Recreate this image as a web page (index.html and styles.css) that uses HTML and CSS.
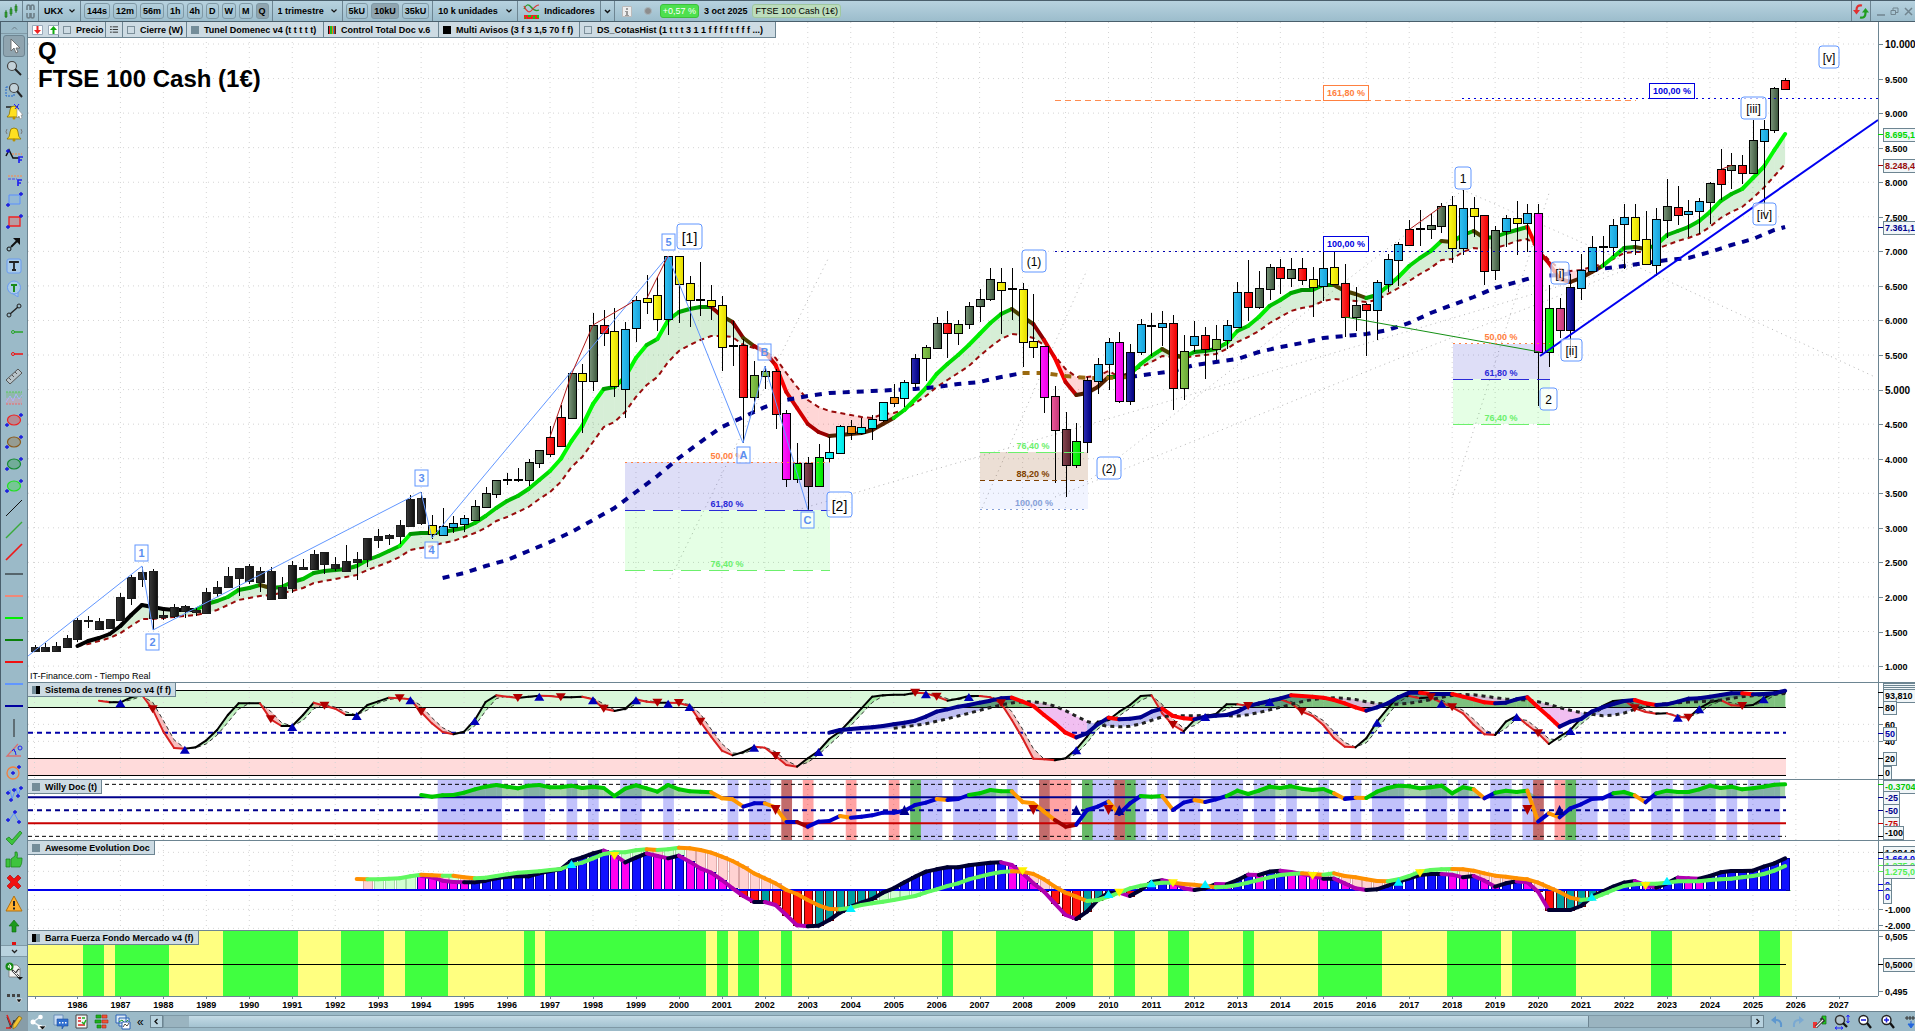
FILE: index.html
```html
<!DOCTYPE html>
<html lang="es">
<head>
  <meta charset="UTF-8">
  <title>FTSE 100 Cash (1€)</title>
  <link rel="stylesheet" href="styles.css">
</head>
<body>
  <header class="topbar">
    <button class="cell icon-cell" aria-label="Tipo de gráfico">
      <svg width="14" height="16" viewBox="0 0 14 16"><path d="M2 7v8M7 4v9M12 1v9" stroke="#2c8a2c"/><path d="M1 9h2v5H1zM6 6h2v5H6zM11 3h2v5h-2z" fill="#35a535" stroke="#1c6d1c" stroke-width=".6"/></svg>
    </button>
    <button class="cell link-cell" aria-label="Vincular">
      <svg width="9" height="15" viewBox="0 0 9 15" fill="none" stroke="#6d7f88" stroke-width="1.6"><path d="M1 6V2.500q0-1.500 1.500-1.500T4 2.500V6M5 6V2.500Q5 1 6.500 1T8 2.500V6M1 9v3.500Q1 14 2.500 14T4 12.500V9M5 9v3.500Q5 14 6.500 14T8 12.500V9"/></svg>
    </button>
    <div class="cell"><select class="pick pick-symbol" aria-label="Valor"><option>UKX</option></select></div>
    <div class="cell group">
      <button class="tf">144s</button><button class="tf">12m</button><button class="tf">56m</button><button class="tf">1h</button><button class="tf">4h</button><button class="tf">D</button><button class="tf">W</button><button class="tf">M</button><button class="tf on">Q</button>
    </div>
    <div class="cell"><select class="pick pick-period" aria-label="Periodo"><option>1 trimestre</option></select></div>
    <div class="cell group">
      <button class="tf">5kU</button><button class="tf on">10kU</button><button class="tf">35kU</button>
    </div>
    <div class="cell"><select class="pick pick-units" aria-label="Unidades"><option>10 k unidades</option></select></div>
    <button class="cell indic">
      <svg width="17" height="16" viewBox="0 0 17 16"><path d="M1 12h15v4H1z" fill="#e22"/><path d="M2 14h1v2H2zM5 12h3v2H5zM10 13h2v3h-2zM14 12h2v3h-2z" fill="#1c1"/><path d="M1 6Q4-1 8 4t8 3" fill="none" stroke="#2a9a2a" stroke-width="1.300"/><path d="M1 3q4 9 8 4t7-5" fill="none" stroke="#d33" stroke-width="1.200"/></svg>
      Indicadores
    </button>
    <button class="cell chev-cell" aria-label="Más indicadores"><svg width="7" height="5" viewBox="0 0 7 5"><path d="M1 1l2.500 2.500L6 1" fill="none" stroke="#111" stroke-width="1.500"/></svg></button>
    <div class="info">
      <button class="plain" aria-label="Información"><svg width="10" height="11" viewBox="0 0 10 11"><path d="M.5.5h9v10h-9z" fill="#eee" stroke="#bbb"/><path d="M4 2h2v2H4zM3 5h3v4h1v1H3V9h1V6H3z" fill="#999"/></svg></button>
      <span class="dot"></span>
      <span class="chg">+0,57 %</span>
      <b>3 oct 2025</b>
      <span class="name">FTSE 100 Cash (1€)</span>
    </div>
    <button class="cell sync" aria-label="Sincronizar">
      <svg width="16" height="15" viewBox="0 0 16 15" fill="none" stroke-width="2.200"><path d="M9 1.500Q3.500.5 3.500 6v1" stroke="#e03030"/><path d="M0 6h7L3.500 10.500z" fill="#e03030"/><path d="M7 13.500q5.500 1 5.500-4.500V7" stroke="#1f9e1f"/><path d="M9 8.500h7L12.500 4z" fill="#1f9e1f"/></svg>
    </button>
    <div class="win">
      <button class="plain" aria-label="Minimizar"><svg width="9" height="9" viewBox="0 0 9 9"><path d="M1 8h8" stroke="#71858f" stroke-width="1.500"/></svg></button>
      <button class="plain" aria-label="Restaurar"><svg width="9" height="9" viewBox="0 0 9 9" fill="none" stroke="#71858f"><path d="M1 3.500h4.500v4H1zM3 3V1h5v4.500H6"/></svg></button>
      <button class="plain" aria-label="Cerrar"><svg width="9" height="9" viewBox="0 0 9 9"><path d="M1 1l7 7M8 1L1 8" stroke="#71858f" stroke-width="1.500"/></svg></button>
    </div>
  </header>

  <main class="work">
    <nav class="rail" aria-label="Herramientas de dibujo">
      <button class="rail-scroll" aria-label="Subir"><svg width="7" height="4" viewBox="0 0 7 4"><path d="M1 3.500L3.500 1 6 3.500" fill="none" stroke="#6d7f88"/></svg></button>
      <div class="tools" id="tools"></div>
      <button class="rail-scroll down" aria-label="Bajar"><svg width="7" height="5" viewBox="0 0 7 5"><path d="M1 1l2.500 2.500L6 1" fill="none" stroke="#222" stroke-width="1.300"/></svg></button>
      <button class="tool tool-cfg" aria-label="Dibujos guardados">
        <svg width="18" height="18" viewBox="0 0 18 18"><path d="M4 3h8l3 3v9H4z" fill="#f4f4f4" stroke="#777" stroke-width=".8"/><circle cx="4.500" cy="4.500" r="4" fill="#178a17"/><path d="M5 2L3 5h4M5.500 3v4" stroke="#fff" fill="none"/><path d="M7 8l7 7M14 7l-4 5" stroke="#333" stroke-width="2"/><path d="M8 9l6 6M14 8l-3 4" stroke="#eee"/><path d="M12 15h6l-3 3z" fill="#111"/></svg>
      </button>
      <button class="tool tool-more" aria-label="Más herramientas">
        <svg width="18" height="12" viewBox="0 0 18 12"><path d="M2 2h3v3H2zM7 2h3v3H7zM12 2h3v3h-3z" fill="#444"/><path d="M11 7h6l-3 4z" fill="#111" stroke="#fff" stroke-width=".6"/></svg>
      </button>
    </nav>

    <section class="charts">
      <div class="panel price">
        <svg id="price" class="plot" viewBox="28 22 1887 660" preserveAspectRatio="none"></svg>
        <div class="tabs">
          <span class="tab">
            <button class="plain" aria-label="Vender"><svg width="11" height="10" viewBox="0 0 11 10"><path d="M.5.5h10v9H.5z" fill="#fff" stroke="#9ab"/><path d="M4.500 1h2v4H9L5.500 9 2 5h2.500z" fill="#e22"/></svg></button>
            <button class="plain" aria-label="Comprar"><svg width="11" height="10" viewBox="0 0 11 10"><path d="M.5.5h10v9H.5z" fill="#fff" stroke="#9ab"/><path d="M4.500 9h2V5H9L5.500 1 2 5h2.500z" fill="#1a1"/></svg></button>
          </span>
          <button class="tab"><i class="sq"></i>Precio</button>
          <button class="tab" aria-label="Lista"><svg width="9" height="9" viewBox="0 0 9 9"><path d="M0 1.500h2M0 4.500h2M0 7.500h2M3 1.500h6M3 4.500h6M3 7.500h6" stroke="#222"/></svg></button>
          <button class="tab"><i class="sq"></i>Cierre (W)</button>
          <button class="tab"><i class="sq grey"></i>Tunel Domenec v4 (t t t t t)</button>
          <button class="tab"><i class="sq multi"></i>Control Total Doc v.6</button>
          <button class="tab"><i class="sq black"></i>Multi Avisos (3 f 3 1,5 70 f f)</button>
          <button class="tab"><i class="sq"></i>DS_CotasHist (1 t t t 3 1 1 f f f f t f f f ...)</button>
        </div>
        <h1 class="title">Q<br>FTSE 100 Cash (1€)</h1>
        <p class="credit">IT-Finance.com - Tiempo Real</p>
      </div>
      <div class="panel trains">
        <svg id="trains" class="plot" viewBox="28 682 1887 97" preserveAspectRatio="none"></svg>
        <button class="tab legend"><i class="sq half"></i>Sistema de trenes Doc v4 (f f)</button>
      </div>
      <div class="panel willy">
        <svg id="willy" class="plot" viewBox="28 779 1887 61" preserveAspectRatio="none"></svg>
        <button class="tab legend"><i class="sq grey"></i>Willy Doc (t)</button>
      </div>
      <div class="panel awesome">
        <svg id="awesome" class="plot" viewBox="28 840 1887 90" preserveAspectRatio="none"></svg>
        <button class="tab legend"><i class="sq grey"></i>Awesome Evolution Doc</button>
      </div>
      <div class="panel force">
        <svg id="force" class="plot" viewBox="28 930 1887 66" preserveAspectRatio="none"></svg>
        <button class="tab legend"><i class="sq half2"></i>Barra Fuerza Fondo Mercado v4 (f)</button>
      </div>
      <div class="panel years">
        <svg id="years" class="plot" viewBox="28 996 1887 15" preserveAspectRatio="none"></svg>
      </div>
    </section>
  </main>

  <footer class="bottombar">
    <button class="draw" aria-label="Dibujar"><svg width="18" height="16" viewBox="0 0 18 16"><path d="M2 3l4 11 3-8 2 6M4 14L14 2" fill="none" stroke="#333"/><path d="M2 1l4 10M1 14h5" stroke="#d22" stroke-width="1.500"/><path d="M14 2l3 2-6 9-3 2 0-4z" fill="#f4c430" stroke="#8a6914" stroke-width=".7"/></svg></button>
    <button class="plain" aria-label="Compartir"><svg width="18" height="16" viewBox="0 0 18 16"><path d="M11 3L4 8l8 5" fill="none" stroke="#eef4f7" stroke-width="1.500"/><circle cx="11.500" cy="3" r="2.300" fill="#fff"/><circle cx="4" cy="8" r="2.500" fill="#fff"/><circle cx="11" cy="13" r="2.300" fill="#fff"/><path d="M10 12h7l-3.500 4z" fill="#111" stroke="#fff" stroke-width=".6"/></svg></button>
    <button class="plain" aria-label="Chat"><svg width="16" height="16" viewBox="0 0 16 16"><path d="M1 1h9v10H1z" fill="#c9dcf2" stroke="#6a8fb8"/><path d="M4 5h11v7h-4l-2 3v-3H4z" fill="#2f6fd0" stroke="#1f4fa0" stroke-width=".6"/><path d="M6 8h1.500v1.500H6zM9 8h1.500v1.500H9zM12 8h1.500v1.500H12z" fill="#fff"/></svg></button>
    <button class="plain" aria-label="Informe"><svg width="13" height="15" viewBox="0 0 13 15"><path d="M1 1h11v13H1z" fill="#f5f5f5" stroke="#444"/><path d="M3 4h3M3 7h3M3 11h7" stroke="#d22" stroke-width="1.500"/><path d="M7 4h3M7 8l2 2 2-4" stroke="#2a2" stroke-width="1.500" fill="none"/></svg></button>
    <button class="plain" aria-label="Órdenes"><svg width="15" height="15" viewBox="0 0 15 15"><path d="M2 1h5v3H2zM1 6h6v3H1zM3 11h4v3H3z" fill="#1db11d" stroke="#0b7a0b" stroke-width=".6"/><path d="M8 1h5v3H8zM8 6h6v3H8zM8 11h4v3H8z" fill="#e53" stroke="#a22" stroke-width=".6"/></svg></button>
    <button class="plain" aria-label="Ventanas"><svg width="16" height="16" viewBox="0 0 16 16"><path d="M1 1h10v8H1zM4 4h10v8H4z" fill="#dfeaf5" stroke="#2a63b8"/><path d="M4 8l3-2 3 3 3-3" fill="none" stroke="#2a2"/><path d="M7 8h8v7H7z" fill="#fff" stroke="#2a63b8"/><path d="M8 13l2-3 2 2 2-3" fill="none" stroke="#222" stroke-width=".8"/></svg></button>
    <button class="plain fold" aria-label="Plegar">«</button>
    <div class="scroller">
      <button class="sc-btn" aria-label="Anterior"><svg width="5" height="7" viewBox="0 0 5 7"><path d="M3.500 1L1 3.500 3.500 6" fill="none" stroke="#111" stroke-width="1.300"/></svg></button>
      <div class="track"><div class="thumb"></div></div>
      <button class="sc-btn" aria-label="Siguiente"><svg width="5" height="7" viewBox="0 0 5 7"><path d="M1.500 1L4 3.500 1.500 6" fill="none" stroke="#111" stroke-width="1.300"/></svg></button>
    </div>
    <div class="zooms">
      <button class="plain" aria-label="Deshacer"><svg width="14" height="14" viewBox="0 0 14 14"><path d="M4 5q8-1 7 7" fill="none" stroke="#5d97cf" stroke-width="2"/><path d="M1 5l5-4v8z" fill="#5d97cf"/></svg></button>
      <button class="plain" aria-label="Rehacer"><svg width="14" height="14" viewBox="0 0 14 14"><path d="M10 5Q2 4 3 12" fill="none" stroke="#7aa9d2" stroke-width="2"/><path d="M13 5L8 1v8z" fill="#7aa9d2"/></svg></button>
      <button class="plain" aria-label="Configurar"><svg width="15" height="16" viewBox="0 0 15 16"><path d="M1 8h4v6H1z" fill="#e33"/><path d="M10 2h4v8h-4z" fill="#2c2" stroke="#161" stroke-width=".7"/><path d="M4 13l7-7M9 4l3 4" stroke="#333" stroke-width="3"/><path d="M4 13l7-7" stroke="#eee" stroke-width="1.300"/></svg></button>
      <button class="plain" aria-label="Ajustar"><svg width="16" height="16" viewBox="0 0 16 16"><circle cx="6" cy="6" r="4.500" fill="#b4c5cd" stroke="#333" stroke-width="1.500"/><path d="M9 9l4 4" stroke="#111" stroke-width="2.300"/><path d="M14 1v8M12.500 3L14 1l1.500 2M12.500 7L14 9l1.500-2M1 14h8M3 12.500L1 14l2 1.500M7 12.500L9 14l-2 1.500" fill="none" stroke="#22f"/></svg></button>
      <button class="plain" aria-label="Alejar"><svg width="16" height="16" viewBox="0 0 16 16"><circle cx="6.500" cy="6" r="4.500" fill="#fff" stroke="#222" stroke-width="1.400"/><path d="M10 9l4 5" stroke="#111" stroke-width="2.300"/><path d="M4 6h5" stroke="#22d" stroke-width="1.600"/></svg></button>
      <button class="plain" aria-label="Acercar"><svg width="16" height="16" viewBox="0 0 16 16"><circle cx="6.500" cy="6" r="4.500" fill="#fff" stroke="#222" stroke-width="1.400"/><path d="M10 9l4 5" stroke="#111" stroke-width="2.300"/><path d="M4 6h5M6.500 3.500v5" stroke="#22d" stroke-width="1.600"/></svg></button>
      <button class="plain" aria-label="Regla"><svg width="16" height="14" viewBox="0 0 16 14"><path d="M2 3h14M4 1v4M7 1v4M10 1v4M13 1v4" stroke="#333"/><path d="M8 6v4M5 9l3 4 3-4z" fill="#26d" stroke="#26d"/></svg></button>
    </div>
  </footer>
  <script src="script.js"></script>
</body>
</html>
```

FILE: styles.css
```css
* { box-sizing: border-box; }
body {
  margin: 0;
  height: 100vh;
  display: flex;
  flex-direction: column;
  overflow: hidden;
  font: 9px "Liberation Sans", Arial, sans-serif;
  color: #000;
  background: #9bbac8;
}
button, select { font: inherit; font-weight: bold; color: inherit; background: none; border: 0; padding: 0; margin: 0; }
svg { display: block; }

/* top toolbar */
.topbar {
  flex: none;
  height: 22px;
  display: flex;
  background: linear-gradient(#b7d2df, #9cbdcc);
  border-top: 1px solid #4a5f6c;
  border-bottom: 1px solid #4a5f6c;
}
.cell { display: flex; align-items: center; justify-content: center; border-right: 1px solid #6d8592; }
.icon-cell { width: 23px; }
.link-cell { width: 16px; }
.group { gap: 3px; padding: 0 3px; }
.pick {
  appearance: none;
  height: 18px;
  padding-left: 5px;
  background: no-repeat right 5px center / 6px 4px url("data:image/svg+xml,%3Csvg xmlns='http://www.w3.org/2000/svg' viewBox='0 0 6 4'%3E%3Cpath d='M.5.5L3 3 5.500.5' fill='none' stroke='%23111' stroke-width='1.200'/%3E%3C/svg%3E");
}
.pick-symbol { width: 41px; }
.pick-period { width: 69px; }
.pick-units { width: 84px; }
.tf { height: 16px; padding: 0 2px; border: 1px solid #7f99a6; border-radius: 3px; }
.tf.on { background: #8fa4af; }
.indic { gap: 4px; padding: 0 5px; }
.chev-cell { width: 14px; }
.info { display: flex; align-items: center; gap: 5px; padding-left: 7px; }
.dot { width: 8px; height: 8px; margin: 0 3px 0 7px; border-radius: 50%; background: #8d8d8d; border: 1px solid #a9b6bc; }
.chg { padding: 1px 2px; border-radius: 3px; color: #fff; background: #4ee04e; border: 1px solid #3cc03c; }
.name { padding: 1px 2px; border-radius: 3px; background: #bcdcbc; border: 1px solid #9fc79f; }
.sync { width: 20px; margin-left: auto; border-left: 1px solid #6d8592; }
.win { display: flex; align-items: center; justify-content: space-around; width: 44px; padding-left: 3px; }
.plain { display: flex; align-items: center; justify-content: center; }

/* left rail */
.work { flex: 1; min-height: 0; display: flex; }
.rail { width: 28px; display: flex; flex-direction: column; border-left: 1px solid #4a5f6c; border-right: 1px solid #6d8592; }
.rail-scroll { flex: none; height: 12px; display: flex; align-items: center; justify-content: center; border-bottom: 1px solid #7f99a6; }
.rail-scroll.down { background: #b9d3df; border-top: 1px solid #7f99a6; }
.tools { flex: 1; min-height: 0; overflow: hidden; padding-top: 1px; }
.tool { width: 26px; height: 22px; display: flex; align-items: center; justify-content: center; }
.tool.on { width: 22px; margin: 0 2px; background: #8fa4af; border: 1px solid #6d8592; border-radius: 3px; }
.tool-cfg { height: 28px; }
.tool-more { height: 26px; }

/* stacked charts */
.charts { flex: 1; min-width: 0; display: flex; flex-direction: column; background: #fff; }
.panel { position: relative; min-height: 0; }
.price { flex: 660 1 0; }
.trains { flex: 97 1 0; }
.willy { flex: 61 1 0; }
.awesome { flex: 90 1 0; }
.force { flex: 66 1 0; }
.years { flex: 15 1 0; }
.plot { width: 100%; height: 100%; }
.tabs {
  position: absolute;
  top: 0;
  left: 0;
  display: grid;
  grid-template-columns: 31px 47px 17px 64px 137px 115px 141px 196px;
}
.tab {
  height: 16px;
  display: flex;
  align-items: center;
  gap: 5px;
  padding: 0 4px;
  white-space: nowrap;
  background: #cddbe3;
  border-right: 1px solid #6d8592;
  border-bottom: 1px solid #6d8592;
}
.legend { position: absolute; top: 0; left: 0; height: 15px; border-top: 1px solid #6d8592; }
.sq { flex: none; width: 8px; height: 8px; border: 1px solid #7d909b; }
.sq.grey { background: #748d99; border-color: #748d99; }
.sq.black { background: #000; border-color: #000; }
.sq.multi { border: 0; background: linear-gradient(90deg, #111 12%, #e22 12% 30%, #2b2 30% 50%, #e80 50% 62%, #29b 62% 75%, #c22 75% 88%, #333 88%); }
.sq.half { border: 0; background: linear-gradient(90deg, #748d99 50%, #000 50%); }
.sq.half2 { border: 0; background: linear-gradient(90deg, #000 50%, #748d99 50%); }
.title { position: absolute; top: 15px; left: 10px; margin: 0; font-size: 24px; line-height: 28px; }
.credit { position: absolute; left: 2px; bottom: 0; margin: 0; line-height: 12px; }

/* svg pieces */
.crisp { shape-rendering: crispEdges; }
.grid { stroke: #d4d4d4; stroke-dasharray: 1 4; }
.frame { stroke: #6d8592; shape-rendering: crispEdges; }
.tick { font-weight: bold; }
.big { font-size: 10px; }
.badge { fill: #f1f6f8; stroke: #6d8592; shape-rendering: crispEdges; }
.wave { fill: #fff; fill-opacity: .7; stroke: #6196ff; }
.wave-text { fill: #5b8ff0; font-weight: bold; font-size: 11px; text-anchor: middle; }
.note-text { font-size: 12px; text-anchor: middle; }
.note-text.large { font-size: 14px; }
.fib { font-weight: bold; text-anchor: middle; }
.year { font-weight: bold; text-anchor: middle; }

/* bottom toolbar */
.bottombar {
  flex: none;
  height: 20px;
  display: flex;
  align-items: center;
  gap: 6px;
  border-top: 1px solid #6d8592;
}
.draw { width: 28px; height: 100%; margin-right: -5px; display: flex; align-items: center; justify-content: center; background: #879da8; }
.fold { font-size: 12px; font-weight: normal; }
.scroller { flex: 1; display: flex; height: 13px; }
.sc-btn { width: 13px; display: flex; align-items: center; justify-content: center; border: 1px solid #6d8592; background: #b7d2df; }
.track { flex: 1; padding-left: 25px; padding-right: 10%; background: #9ab4c0; border: 1px solid #7f99a6; }
.thumb { height: 100%; background: linear-gradient(#c4dbe6, #a4c3d1); border-right: 1px solid #6d8592; }
.zooms { display: flex; gap: 7px; margin-right: -4px; }
```

FILE: script.js
```js
const NS = 'http://www.w3.org/2000/svg';
const AXIS = 1878;
const END = 1786;
const STEP = 10.74;
const X = i => 34.5 + STEP * i;
// oscillator samples are kept in thirds of a pixel below y = 670
const Y = v => 670 + v / 3;

function el(parent, tag, attrs, text) {
  const e = document.createElementNS(NS, tag);
  for (const k in attrs) e.setAttribute(k, attrs[k]);
  if (text !== undefined) e.textContent = text;
  parent.appendChild(e);
  return e;
}
function line(p, x1, y1, x2, y2, stroke, w = 1, dash, cls) {
  const a = { x1, y1, x2, y2, stroke, 'stroke-width': w };
  if (dash) a['stroke-dasharray'] = dash;
  if (cls) a.class = cls;
  return el(p, 'line', a);
}
function rect(p, x, y, width, height, fill, extra) {
  return el(p, 'rect', { x, y, width, height, fill, ...extra });
}
function poly(p, pts, stroke, w = 1, dash) {
  const a = { points: pts.map(q => q.join()).join(' '), fill: 'none', stroke, 'stroke-width': w };
  if (dash) a['stroke-dasharray'] = dash;
  return el(p, 'polyline', a);
}
function series(str, start) {
  const s = {};
  str.trim().split(/\s+/).forEach((v, k) => { s[start + k] = +v; });
  s.start = start;
  return s;
}
// one coloured stroke per pair of samples
function segments(p, s, last, y, w, colour) {
  for (let i = s.start; i < last; i++) {
    el(p, 'line', { x1: X(i), y1: y(s[i]), x2: X(i + 1), y2: y(s[i + 1]), stroke: colour(i), 'stroke-width': w, 'stroke-linecap': 'round' });
  }
}
function band(p, a, b, from, to, y, colour) {
  for (let i = from; i < to; i++) {
    const c = colour(i);
    if (!c) continue;
    el(p, 'polygon', { points: [[X(i), y(a[i])], [X(i + 1), y(a[i + 1])], [X(i + 1), y(b[i + 1])], [X(i), y(b[i])]].map(q => q.join()).join(' '), fill: c });
  }
}
function tri(p, x, y, up, w, h, fill) {
  const d = up ? -1 : 1;
  el(p, 'polygon', { points: `${x - w},${y - d * h} ${x + w},${y - d * h} ${x},${y + d * h}`, fill });
}
function years(p, y1, y2) {
  for (let i = 0; i <= 168; i += 4) line(p, X(i), y1, X(i), y2, '', 1, null, 'grid');
}
function frame(p, top, bottom) {
  line(p, AXIS, top, AXIS, bottom, '', 1, null, 'frame');
  line(p, 28, top, 1915, top, '', 2, null, 'frame');
}
function tick(p, y, text, colour = '#000', boxed, width, cls = '') {
  line(p, AXIS, y, AXIS + 5, y, boxed ? colour : '#6d8592', 1, null, 'crisp');
  if (boxed) el(p, 'rect', { x: 1883, y: boxed - 6, width: width || 40, height: 13, class: 'badge' });
  el(p, 'text', { x: 1885, y: (boxed || y) + 4, fill: colour, class: 'tick ' + cls }, text);
}

// ---- price panel ----
const P = document.getElementById('price');
const defs = el(P, 'defs', {});
const FILL = {
  k: ['#3a3a3a', '#111'], g: ['#7f9a7f', '#3f5a3f'], c: ['#35c4f4', '#18a4dc'], y: ['#ffff20', '#e6dc00'],
  r: ['#ff3838', '#f00000'], m: ['#ff20ff', '#f000e8'], l: ['#20ff20', '#00e400'], p: ['#f05a9c', '#c43a78'],
  w: ['#8a4a54', '#5c2430'], n: ['#3030b8', '#000080'], o: ['#8ccc50', '#6aa836'], a: ['#20ffff', '#00e8e8'],
  e: ['#ff9a20', '#ec8000'], d: ['#000', '#000']
};
for (const k in FILL) {
  const g = el(defs, 'linearGradient', { id: 'f-' + k });
  el(g, 'stop', { offset: 0, 'stop-color': FILL[k][0] });
  el(g, 'stop', { offset: 1, 'stop-color': FILL[k][1] });
}
// high, body top, body bottom, low, kind
const CANDLES = `
645 647 651 652 k|643 647 651 651 k|642 646 651 652 k|635 638 647 647 k|618 620 639 642 k|616 620 621 628 k|618 621 629 630 k|619 619 628 628 k|593 597 620 620 k|575 577 598 605 k
567 572 579 587 k|569 571 618 630 k|611 615 617 620 k|604 607 616 618 k|605 606 611 618 k|607 610 612 616 k|588 592 613 613 k|581 587 593 597 k|567 576 587 587 k|568 568 578 596 k
564 566 581 584 k|567 571 582 592 k|567 571 599 600 k|577 587 598 598 k|561 565 588 593 k|559 567 569 569 k|550 554 569 569 k|552 552 564 574 k|557 564 568 571 k|545 561 571 572 k
552 559 562 580 k|538 538 559 567 k|529 536 540 548 k|534 535 538 545 k|520 525 536 544 k|495 499 526 527 k|492 498 523 525 k|515 525 534 539 y|508 526 535 535 c|516 523 527 533 c
515 518 524 532 c|500 506 520 520 g|487 493 507 508 g|480 480 494 498 g|473 480 480 485 d|468 480 480 482 d|459 462 480 486 g|450 450 463 468 g|426 437 454 457 r|405 417 446 446 r
373 373 418 418 g|364 373 381 433 y|313 325 381 391 g|310 325 333 346 r|308 331 386 397 y|322 329 389 418 c|296 300 328 342 c|275 298 302 314 y|277 295 319 331 y|256 256 319 335 c
256 256 284 323 y|276 283 300 327 y|262 300 300 316 d|285 300 306 320 y|296 305 347 371 y|321 346 346 366 d|339 345 397 443 r|361 375 397 412 o|366 371 376 389 o|369 371 414 429 r
410 413 479 487 m|443 463 479 483 l|457 463 486 510 w|444 457 486 486 l|437 452 458 463 a|425 426 453 453 a|420 426 433 440 e|418 427 433 435 a|415 419 428 440 a|402 402 420 422 a
384 397 403 407 e|380 382 398 407 a|354 358 383 388 n|345 347 358 381 o|317 323 348 348 g|311 323 333 358 r|320 324 333 345 o|302 306 324 329 g|289 299 306 322 g|268 279 299 301 g
268 282 290 334 y|268 289 289 320 d|283 289 342 367 y|294 341 347 358 y|346 346 397 413 m|386 396 430 483 p|412 429 465 497 w|423 441 465 468 l|377 380 442 453 n|358 364 381 394 c
338 342 364 390 c|332 342 401 403 m|344 352 401 405 n|319 324 352 355 c|313 326 326 356 d|311 323 327 346 c|315 323 388 410 r|335 351 388 400 o|321 336 345 352 c|327 335 349 379 r
325 339 349 360 o|320 325 340 349 c|282 292 327 327 c|260 292 307 321 r|271 288 307 309 g|264 267 289 300 g|259 267 278 294 r|258 269 278 287 g|258 268 280 285 r|267 279 287 317 y
250 268 286 301 c|252 267 284 284 y|264 283 317 337 r|287 305 317 331 g|303 304 310 356 r|280 282 310 340 c|254 259 284 292 c|242 244 260 286 c|220 229 245 246 r|210 229 229 246 d
213 225 229 239 g|203 206 226 233 g|196 205 248 263 y|190 208 248 255 c|197 208 216 237 y|215 215 271 285 r|226 230 270 280 g|215 218 231 247 c|201 218 223 255 y|204 213 223 252 c
204 213 352 406 m|285 308 352 367 l|298 308 330 338 p|274 287 330 357 n|254 270 288 300 c|236 247 271 271 c|236 247 247 267 d|219 225 247 256 c|204 217 224 269 c|204 217 240 255 y
211 239 264 265 y|208 219 265 276 c|179 206 220 238 g|186 207 215 225 r|200 211 214 237 c|198 201 211 234 c|182 183 202 224 g|149 169 184 200 r|153 165 170 189 g|155 165 173 184 r
120 140 173 174 g|120 129 141 215 c|87 88 130 133 g|78 80 89 90 r`.trim().split(/[|\n]/).map(s => s.split(' '));

const fast = series(`646 641 638 634 626 615 605 607 609 610 610 610 604 601 597 590 588 585 588 587 582 579 573 571 570 569 566 560 556 551 546 534 533 533 532 530 528 523 516 508 501 496 489 480 471 459 441 426 404 389 387 377 358 345 339 320 312 309 307 307 316 322 338 346 352 365 392 408 424 432 436 435 434 433 430 424 418 410 399 388 374 364 355 345 334 323 314 309 317 324 340 358 382 395 393 387 377 377 374 364 356 349 355 357 352 351 349 343 331 326 317 306 300 293 290 290 285 285 291 294 298 295 286 277 266 258 251 241 242 235 231 238 237 233 230 227 251 263 279 282 278 272 266 257 248 247 249 245 235 231 227 221 212 201 194 189 178 167 150 134`, 4);
const slow = series(`646 644 641 638 633 626 619 619 618 617 616 615 613 610 605 600 598 596 595 593 591 588 583 581 579 577 575 570 566 562 557 550 548 546 543 541 537 533 528 521 517 512 507 499 492 482 467 457 442 427 422 412 397 385 377 362 351 345 340 336 336 337 345 348 351 358 373 387 400 407 411 413 415 417 418 414 413 410 403 396 387 380 373 366 356 347 339 334 335 338 345 356 369 377 377 376 371 377 373 367 362 356 357 358 356 355 354 349 342 337 331 323 317 311 308 306 301 299 300 301 302 300 294 288 281 274 268 260 259 252 248 249 248 245 241 239 248 260 269 271 270 267 264 259 253 252 252 249 245 241 238 234 227 218 212 207 198 188 176 164`, 4);
// [index, y] of the long average
const LONG = [[38,578],[40,573],[42,566],[44,560],[46,551],[48,542],[50,532],[52,520],[54,508],[56,492],[58,476],[60,458],[62,442],[64,427],[66,417],[68,407],[70,400],[72,396],[74,393],[76,392],[78,391],[80,390],[82,389],[84,387],[86,384],[88,382],[90,377],[92,373]];
const LONG_FLAT = [[92,373],[94,373],[96,376],[98,378],[100,378],[102,377]];
const LONG_END = [[102,377],[104,374],[106,371],[108,365],[110,362],[112,359],[114,352],[116,347],[118,343],[120,338],[122,336],[124,334],[126,330],[128,323],[130,313],[132,305],[134,297],[136,288],[138,282],[140,276],[142,275],[145,270],[148,266],[150,263],[152,260],[154,258],[156,252],[158,245],[160,239],[162,230],[163,227]];

years(P, 22, 682);
const LEVELS = ['10.000', '9.500', '9.000', '8.500', '8.000', '7.500', '7.000', '6.500', '6.000', '5.500', '5.000', '4.500', '4.000', '3.500', '3.000', '2.500', '2.000', '1.500', '1.000'];
LEVELS.forEach((t, k) => line(P, 28, 44 + 34.56 * k, AXIS, 44 + 34.56 * k, '', 1, null, 'grid'));

// grey projection lines
for (const pts of [
  [[670, 579], [828, 259]], [[797, 510], [950, 465], [1450, 319], [1640, 262]], [[1055, 497], [1400, 358], [1640, 264]],
  [[1087, 482], [1463, 190], [1547, 227], [1640, 268], [1875, 377]], [[982, 508], [1087, 270]], [[1453, 495], [1550, 190]]
]) poly(P, pts, '#b4b4b4', 1, '1 4');

// retracement zones
function zone(x1, x2, ys, fills) {
  fills.forEach((f, k) => rect(P, x1, ys[k], x2 - x1, ys[k + 1] - ys[k], f));
}
zone(625, 830, [462, 510, 570], ['rgba(60,60,210,.17)', 'rgba(0,255,0,.1)']);
zone(980, 1088, [452, 480, 509], ['rgba(150,80,20,.18)', 'rgba(80,120,255,.08)']);
zone(1453, 1550, [344, 379, 424], ['rgba(60,60,210,.17)', 'rgba(0,255,0,.1)']);

band(P, fast, slow, 4, 163, v => v, i => fast[i] + fast[i + 1] <= slow[i] + slow[i + 1] ? 'rgba(0,150,0,.16)' : 'rgba(255,0,0,.16)');
poly(P, Object.keys(slow).filter(k => k !== 'start').map(k => [X(+k), slow[k]]), '#980c0c', 2, '5 4');
segments(P, fast, 163, v => v, 4, i => {
  const rise = fast[i] - fast[i + 1];
  if (i < 15) return '#000';
  if (fast[i + 1] <= slow[i + 1]) {
    if (rise >= 0) return `rgb(0,${Math.min(250, 140 + rise * 9)},0)`;
    return rise < -8 ? '#8b0000' : '#4a4000';
  }
  return rise < 0 ? `rgb(${Math.min(250, 130 - rise * 5)},0,0)` : '#552200';
});
const lp = a => a.map(([i, y]) => [X(i), y]);
poly(P, lp(LONG), '#00008c', 4, '7 7');
poly(P, lp(LONG_FLAT), '#9a6a10', 4, '7 7');
poly(P, lp(LONG_END), '#00008c', 4, '7 7');

CANDLES.forEach(([hi, top, bot, lo, kind], i) => {
  const x = Math.round(X(i));
  line(P, x, hi, x, lo, '#000', 1, null, 'crisp');
  if (kind === 'd') rect(P, x - 4, top - 1, 9, 2, '#000');
  else rect(P, x - 4, +top, 8, Math.max(1, bot - top), `url(#f-${kind})`, { stroke: kind === 'k' ? '#1c1c1c' : '#000', class: 'crisp' });
});

// trend lines and wave paths
poly(P, [[28, 656], [142, 566], [153, 630], [421, 492], [432, 538], [668, 256], [743, 443], [765, 366], [808, 510]], '#6196ff');
poly(P, [[550, 437], [572, 373], [593, 325], [636, 300]], '#b01818');
poly(P, [[647, 298], [668, 256]], '#b01818');
poly(P, [[1410, 229], [1442, 206]], '#b01818');
poly(P, [[1722, 169], [1732, 165]], '#b01818');
poly(P, [[1345, 317], [1540, 352]], '#149014');
line(P, 1540, 356, AXIS, 120, '#0000f0', 2);
line(P, 1055, 251, 1640, 251, '#0000b0', 1, '2 4', 'crisp');
line(P, 1462, 98, AXIS, 98, '#0000e0', 1, '2 4', 'crisp');
line(P, 1055, 100, 1636, 100, '#ff8c50', 1, '6 4', 'crisp');

// fibonacci levels: x1, x2, y, label x, label y, text, colour, dash
for (const [x1, x2, y, tx, ty, t, c, d] of [
  [625, 830, 462, 727, 459, '50,00 %', '#ff8040', '2 4'], [625, 830, 510, 727, 507, '61,80 %', '#2a2ad8', '20 8'], [625, 830, 570, 727, 567, '76,40 %', '#6cf06c', '20 8'],
  [980, 1088, 452, 1033, 449, '76,40 %', '#6cf06c', '20 8'], [980, 1088, 480, 1033, 477, '88,20 %', '#804000', '5 4'], [980, 1088, 509, 1034, 506, '100,00 %', '#86a0d8', '2 4'],
  [1453, 1550, 343, 1501, 340, '50,00 %', '#ff8040', '2 4'], [1453, 1550, 379, 1501, 376, '61,80 %', '#2a2ad8', '20 8'], [1453, 1550, 424, 1501, 421, '76,40 %', '#6cf06c', '20 8']
]) {
  line(P, x1, y, x2, y, c, 1, d, 'crisp');
  el(P, 'text', { x: tx, y: ty, fill: c, class: 'fib' }, t);
}
for (const [x, y, t, c] of [[1323, 236, '100,00 %', '#0000e0'], [1649, 83, '100,00 %', '#0000e0'], [1323, 85, '161,80 %', '#ff8040']]) {
  rect(P, x, y, 45, 15, '#fff', { stroke: c, class: 'crisp' });
  el(P, 'text', { x: x + 23, y: y + 11, fill: c, class: 'fib' }, t);
}

for (const [x, y, t] of [[141, 553, '1'], [152, 642, '2'], [421, 478, '3'], [431, 550, '4'], [668, 242, '5'], [743, 455, 'A'], [764, 352, 'B'], [807, 520, 'C']]) {
  rect(P, x - 6, y - 8, 13, 16, '#fff', { class: 'wave' });
  el(P, 'text', { x: x + 0.5, y: y + 4, class: 'wave-text' }, t);
}
for (const [x, y, w, h, t, large] of [
  [677, 224, 25, 25, '[1]', 1], [827, 492, 25, 25, '[2]', 1], [1022, 250, 24, 22, '(1)'], [1097, 457, 24, 22, '(2)'], [1455, 167, 16, 22, '1'], [1540, 388, 17, 22, '2'],
  [1551, 262, 18, 22, '[i]'], [1561, 339, 21, 22, '[ii]'], [1741, 97, 25, 22, '[iii]'], [1753, 203, 23, 22, '[iv]'], [1819, 46, 20, 22, '[v]']
]) {
  rect(P, x, y, w, h, '#fff', { class: 'wave', rx: 3 });
  el(P, 'text', { x: x + w / 2, y: y + h / 2 + (large ? 6 : 5), class: 'note-text' + (large ? ' large' : '') }, t);
}

rect(P, AXIS, 22, 40, 660, '#fff');
line(P, AXIS, 22, AXIS, 682, '', 1, null, 'frame');
LEVELS.forEach((t, k) => tick(P, Math.round(44 + 34.56 * k), t, '#000', 0, 0, t === '10.000' || t === '5.000' ? 'big' : ''));
tick(P, 134, '8.695,1', '#00d800', 134);
tick(P, 165, '8.248,4', '#980c0c', 165);
tick(P, 227, '7.361,1', '#00008c', 227);

// ---- train system ----
const T = document.getElementById('trains');
const thin = series(`92 97 97 82 75 118 185 234 236 232 211 180 135 100 100 100 148 168 168 135 98 107 116 135 135 105 94 83 85 88 126 160 186 193 185 150 96 76 80 84 80 77 78 82 82 80 88 116 123 116 88 95 98 98 99 108 155 200 242 256 246 230 233 258 285 290 265 243 207 184 150 115 80 76 74 74 68 70 80 92 86 78 78 82 100 150 205 266 268 271 265 238 200 155 150 125 105 78 76 130 165 184 150 138 132 103 103 108 103 93 88 100 125 138 165 205 230 232 205 155 115 78 78 85 82 98 112 130 165 193 195 155 138 165 190 222 200 180 145 128 108 93 90 115 126 131 130 140 143 115 97 90 106 108 105 85 68`, 6);
for (let i = 163; i > 86; i--) if (thin[i] === undefined) thin[i] = thin[i - 1] || 68;
const thick = series(`188 180 177 174 172 168 163 158 152 140 125 118 110 105 98 92 85 83 95 108 135 160 188 202 190 163 143 148 146 142 125 116 138 145 148 140 137 135 125 108 100 93 85 76 78 80 83 90 100 112 122 112 100 82 68 68 72 72 72 80 88 97 100 98 88 82 112 140 170 155 147 125 112 102 93 90 100 105 103 95 86 85 80 75 70 70 73 72 70 62`, 74);
const thinLag = { start: 6 }, thickLag = { start: 74 };
for (let i = 6; i <= 163; i++) thinLag[i] = ((thin[i - 1] || thin[i]) + thin[i]) / 2;
for (let i = 74; i <= 163; i++) {
  let sum = 0;
  for (let k = 0; k < 7; k++) sum += thick[Math.max(74, i - k)];
  thickLag[i] = sum / 7;
}
rect(T, 28, Y(61), END - 28, 17, 'rgba(0,200,0,.15)');
rect(T, 28, Y(265), END - 28, 17, 'rgba(255,0,0,.14)');
years(T, 682, 779);
for (const v of [163, 214]) line(T, 28, Y(v), AXIS, Y(v), '', 1, null, 'grid');
band(T, thin, thinLag, 6, 163, Y, i => thin[i + 1] > thinLag[i + 1] ? 'rgba(220,0,0,.25)' : 'rgba(0,190,0,.25)');
band(T, thick, thickLag, 74, 163, Y, i => thick[i + 1] > thickLag[i + 1] ? 'rgba(200,0,200,.25)' : 'rgba(0,0,200,.25)');
const eighty = {}, capped = {};
for (let i = 74; i <= 163; i++) { eighty[i] = 112; capped[i] = Math.min(112, thick[i]); }
band(T, capped, eighty, 83, 163, Y, () => 'rgba(0,120,0,.42)');
for (const v of [61, 112, 265, 316]) line(T, 28, Y(v), END, Y(v), '#000', 1, null, 'crisp');
line(T, 28, Y(188), END, Y(188), '#0000a8', 2, '5 4');
const pts = (s, a, b) => { const r = []; for (let i = a; i <= b; i++) r.push([X(i), Y(s[i])]); return r; };
poly(T, pts(thinLag, 6, 163), '#333', 1, '4 3');
segments(T, thin, 163, Y, 2, i => thin[i + 1] > thin[i] ? '#d82020' : '#000');
poly(T, pts(thickLag, 80, 163), '#222', 3, '4 4');
segments(T, thick, 163, Y, 4, i => thick[i + 1] > thick[i] + 1 ? '#f00' : '#00008c');
[11, 22, 27, 34, 36, 45, 49, 53, 58, 60, 62, 69, 82, 84, 90, 106, 113, 118, 130, 132, 140, 149, 154, 159].forEach(i => tri(T, X(i), Y(thin[i]), false, 5, 4, '#b00000'));
[8, 14, 24, 30, 35, 41, 47, 52, 56, 59, 61, 67, 73, 83, 87, 97, 109, 115, 125, 131, 138, 143, 153, 155, 161].forEach(i => tri(T, X(i), Y(thin[i]) + 1, true, 5, 4, '#0000b8'));
frame(T, 682, 779);
tick(T, 724, '60');
tick(T, 741, '40');
for (const y of [683, 685, 687]) rect(T, 1883, y, 40, 13, '', { class: 'badge' });
tick(T, 692, '93,810', '#000', 695);
tick(T, 707, '80', '#000', 707, 13);
tick(T, 733, '50', '#0000a8', 733, 13);
tick(T, 758, '20', '#000', 758, 13);
tick(T, 775, '0', '#000', 772, 8);

// ---- willy ----
const W = document.getElementById('willy');
const BLUE = 'rgba(0,0,240,.24)', RED = 'rgba(255,0,0,.36)', DARK = 'rgba(150,0,0,.58)', GREEN = 'rgba(0,140,0,.6)';
// first bar, bar count, colour
const BANDS = [[38, 6, BLUE], [46, 2, BLUE], [50, 1, BLUE], [52, 1, BLUE], [55, 2, BLUE], [59, 1, BLUE], [65, 1, BLUE], [67, 2, BLUE], [70, 1, DARK], [72, 1, RED], [76, 1, RED], [80, 1, RED], [82, 1, GREEN], [83, 2, BLUE], [86, 4, BLUE], [91, 1, BLUE], [94, 1, DARK], [95, 2, RED], [98, 1, GREEN], [99, 2, BLUE], [101, 1, DARK], [102, 1, GREEN], [103, 1, BLUE], [105, 1, BLUE], [107, 2, BLUE], [110, 3, BLUE], [114, 2, BLUE], [117, 1, BLUE], [120, 1, BLUE], [123, 1, BLUE], [125, 3, BLUE], [130, 2, BLUE], [133, 1, BLUE], [136, 2, BLUE], [139, 1, BLUE], [140, 1, DARK], [142, 1, RED], [143, 1, GREEN], [144, 2, BLUE], [147, 2, BLUE], [151, 2, BLUE], [154, 3, BLUE], [158, 1, BLUE], [160, 3, BLUE]];
const will = series(`375 380 376 375 368 358 350 345 350 355 347 345 352 352 347 354 350 354 378 356 346 355 365 345 358 364 365 367 385 388 410 400 400 412 456 456 470 455 453 438 443 440 436 428 428 422 405 398 387 390 387 375 370 360 364 364 396 400 425 450 470 464 420 410 395 432 400 378 380 378 420 398 390 396 388 378 362 372 362 350 354 349 356 360 357 370 387 383 384 365 354 347 349 355 352 347 370 352 358 385 368 362 366 362 455 430 442 415 403 387 385 370 366 376 397 370 362 366 366 358 347 354 350 358 355 350 344 343`, 36);
years(W, 779, 840);
for (const [i, n, c] of BANDS) rect(W, X(i) - 5, 779, n * STEP, 61, c);
const quarter = {}, above = {};
for (let i = 36; i <= 163; i++) { quarter[i] = 382; above[i] = Math.min(382, will[i]); }
band(W, above, quarter, 38, 163, Y, () => 'rgba(60,160,60,.45)');
line(W, 28, Y(343), END, Y(343), '#000', 1, '4 3');
line(W, 28, Y(499), END, Y(499), '#000', 1, '4 3');
line(W, 28, Y(382), END, Y(382), '#00008c', 2);
line(W, 28, Y(421), END, Y(421), '#00008c', 2, '5 4');
line(W, 28, Y(460), END, Y(460), '#c80000', 2);
segments(W, will, 163, Y, 4, i => {
  if (will[i] <= 384 && will[i + 1] <= 382) return '#00c800';
  if (will[i + 1] > 462) return '#a00000';
  return will[i + 1] > will[i] ? '#ff9800' : '#0000c8';
});
[69, 93, 100, 139].forEach(i => tri(W, X(i), 810, false, 5, 5, '#b00000'));
[81, 97, 101, 142].forEach(i => tri(W, X(i), 810, true, 5, 5, '#00008c'));
frame(W, 779, 840);
tick(W, 784, '-0.3704', '#00c800', 786);
tick(W, 797, '-25', '#00008c', 797, 16);
tick(W, 823, '-75', '#c80000', 823, 16);
tick(W, 810, '-50', '#00008c', 810, 16);
tick(W, 836, '-100', '#000', 832, 20);

// ---- awesome ----
const A = document.getElementById('awesome');
const ao = series(`618 622 632 636 637 637 632 625 620 619 619 610 603 598 572 562 550 542 555 577 563 550 558 565 557 575 595 608 630 655 678 696 696 705 735 766 769 767 750 728 710 698 687 668 655 637 620 605 598 592 592 586 582 578 577 585 610 640 665 700 735 747 725 690 668 668 678 660 636 631 637 655 660 655 642 643 630 614 615 605 602 606 612 618 626 626 640 655 660 658 647 635 625 615 612 612 614 622 618 632 650 640 634 637 665 720 720 720 708 680 665 650 638 633 645 653 640 623 625 626 618 607 603 603 602 590 580 565`, 36);
const sig = series(`627 628 628 626 625 619 614 616 617 617 622 625 623 618 613 608 606 604 600 597 585 578 565 552 547 547 541 538 540 538 533 535 540 548 560 573 590 610 625 640 660 672 690 706 717 718 713 705 700 695 690 684 678 667 658 648 640 628 620 612 606 604 605 612 628 650 668 680 693 690 680 668 655 647 642 638 638 642 644 648 652 650 645 638 630 622 615 612 610 612 614 610 618 622 628 633 634 628 618 605 600 598 597 598 602 610 617 620 625 628 638 652 666 683 690 686 673 660 648 643 641 641 638 634 634 634 630 628 626 622 618 612 602 588`, 30);
years(A, 840, 930);
for (const v of [547, 604, 718, 775]) line(A, 28, Y(v), AXIS, Y(v), '', 1, null, 'grid');
for (let i = 31; i <= 163; i++) {
  const top = Math.min(661, sig[i]), bot = Math.max(661, sig[i]);
  const up = sig[i] <= sig[i - 1];
  rect(A, Math.round(X(i)) - 4, Y(top), 9, (bot - top) / 3, up ? '#d2ffd2' : '#ffd2d2', { stroke: up ? '#a8d8a8' : '#dca8a8', class: 'crisp' });
}
for (let i = 36; i <= 163; i++) {
  const top = Math.min(661, ao[i]), bot = Math.max(661, ao[i]);
  const up = i === 36 ? false : ao[i] <= ao[i - 1];
  const c = ao[i] < 661 ? (up ? '#1010ff' : '#ff00f0') : (up ? '#00a0a0' : '#ff1010');
  const x = Math.round(X(i));
  rect(A, x - 5, Y(top), 11, (bot - top) / 3, '#fff', { class: 'crisp' });
  rect(A, x - 4, Y(top), 8, (bot - top) / 3, c, { stroke: ao[i] < 661 ? '#0000a0' : '#600', class: 'crisp' });
}
line(A, 28, 890, END, 890, '#0000f0', 2);
segments(A, ao, 163, Y, 4, i => ao[i + 1] > ao[i] ? '#b000b0' : '#000030');
segments(A, sig, 163, Y, 4, i => sig[i + 1] > sig[i] ? '#ff9000' : '#60f860');
[[50, 582], [76, 714], [100, 672], [104, 640], [109, 642], [127, 635], [145, 680], [152, 632]].forEach(([i, v]) => tri(A, X(i), Y(v), true, 5, 4, '#00f0ff'));
[[54, 558], [92, 604], [101, 668], [106, 640], [119, 618], [129, 610], [150, 648]].forEach(([i, v]) => tri(A, X(i), Y(v), false, 5, 4, '#fff000'));
frame(A, 840, 930);
tick(A, 852, '1.984,8', '#000', 852);
tick(A, 858, '1.664,0', '#0000e0', 858);
tick(A, 865, '1.275,0', '#50f050', 865);
tick(A, 871, '1.275,0', '#50f050', 871);
tick(A, 884, '0', '#0000e0', 884, 8);
tick(A, 890, '0', '#0000e0', 890, 8);
tick(A, 890, '0', '#0000e0', 896, 8);
tick(A, 909, '-1.000');
tick(A, 925, '-2.000');

// ---- force bar ----
const F = document.getElementById('force');
rect(F, 28, 930, 1764, 66, '#ffff80');
for (const [i, n] of [[5, 2], [8, 5], [18, 7], [29, 4], [35, 4], [46, 1], [48, 15], [64, 1], [66, 2], [70, 1], [85, 1], [90, 9], [101, 2], [106, 2], [113, 1], [120, 6], [132, 5], [138, 6], [151, 2], [161, 2]]) {
  rect(F, Math.round(X(i) - 5), 930, Math.round(n * STEP), 66, '#40ff40');
}
line(F, 28, 964, END, 964, '#000', 1, null, 'crisp');
frame(F, 930, 996);
tick(F, 936, '0,505');
tick(F, 964, '0,5000', '#000', 964, 32);
tick(F, 991, '0,495');

// ---- year scale ----
const S = document.getElementById('years');
line(S, 28, 996, AXIS, 996, '', 2, null, 'frame');
for (let i = 0; i <= 168; i += 4) {
  line(S, Math.round(X(i)), 996, Math.round(X(i)), 999, '', 1, null, 'frame');
  if (i) el(S, 'text', { x: X(i), y: 1008, class: 'year' }, 1985 + i / 4);
}

// ---- drawing tools ----
const plus = (x, y) => `<path d="M${x - 2} ${y}h4M${x} ${y - 2}v4" stroke="#1414e0" stroke-width="1.3"/>`;
const hline = c => `<path d="M0 9h18" stroke="${c}" stroke-width="2"/>`;
const diag = (c, w) => `<path d="M1 17L17 1" stroke="${c}" stroke-width="${w}"/>`;
const oval = c => `<ellipse cx="9" cy="9" rx="6.5" ry="5" fill="${c}" fill-opacity=".3" stroke="${c}" stroke-width="1.2"/>` + plus(2, 14) + plus(16, 4);
const bell = '<path d="M2 14q3-2 3-7 0-4 4-4t4 4q0 5 3 7z" fill="#ffe020" stroke="#8a7000" stroke-width=".8"/><circle cx="9" cy="15" r="1.5" fill="#b89000"/>';
const TOOLS = [
  ['Puntero', '<path d="M6 2v12l3-3 2 5 2-1-2-4h4z" fill="#fff" stroke="#666" stroke-width=".9"/>'],
  ['Lupa', '<circle cx="7" cy="7" r="4.500" fill="#c3d2d9" stroke="#444" stroke-width="1.2"/><path d="M10 10l6 6" stroke="#222" stroke-width="2"/>'],
  ['Zoom de área', '<path d="M1 6h8v9H1z" fill="none" stroke="#2266cc" stroke-dasharray="2 1"/><circle cx="9" cy="7" r="4.500" fill="#c3d2d9" stroke="#444" stroke-width="1.2"/><path d="M12 10l5 6" stroke="#222" stroke-width="2"/>'],
  ['Alerta en línea', '<path d="M1 4h12" stroke="#222" stroke-width="1.5"/>' + bell + '<path d="M9 1l5 5M14 1l-4 5" stroke="#22f"/><path d="M12 5v10l2-2 1 3 2-1-1-3h2z" fill="#fff" stroke="#888" stroke-width=".6"/>'],
  ['Alerta', bell + '<path d="M2 4q-2 3 0 5M16 4q2 3 0 5" fill="none" stroke="#777"/>'],
  ['Extensión', '<path d="M1 9l3-6 4 8h6" fill="none" stroke="#111" stroke-width="1.5"/><path d="M7 7h10" stroke="#f84" stroke-dasharray="2 1"/><path d="M14 16v-6h4M14 13h3" fill="none" stroke="#22e" stroke-width="1.7"/>' + plus(3, 4)],
  ['Retroceso', '<path d="M3 7h14" stroke="#f84" stroke-dasharray="2 1"/><path d="M3 10h9" stroke="#44e" stroke-dasharray="3 1"/><path d="M13 17v-6h4M13 14h3" fill="none" stroke="#22e" stroke-width="1.7"/>'],
  ['Rectángulo azul', '<path d="M4 4h11v9H4z" fill="#8ab8e8" fill-opacity=".4" stroke="#5a8fff"/>' + plus(3, 14) + plus(16, 3)],
  ['Rectángulo rojo', '<path d="M4 4h11v9H4z" fill="#c88" fill-opacity=".6" stroke="#f02020" stroke-width="1.300"/>' + plus(3, 14) + plus(16, 3)],
  ['Flecha', '<circle cx="4" cy="14" r="2" fill="none" stroke="#111"/><path d="M6 12l6-6" stroke="#111" stroke-width="2"/><path d="M8 3h7v7z" fill="#111"/>'],
  ['Texto', '<rect x="2" y="2" width="14" height="14" rx="2" fill="#a9cbe8" stroke="#6a9bf0"/><path d="M5 6V5h8v1M9 5v8M7 13h4" fill="none" stroke="#222" stroke-width="1.8"/>'],
  ['Globo de texto', '<path d="M7 14l6 4v-5z" fill="#a9cbe8" stroke="#6a9bf0"/><circle cx="9" cy="8.500" r="6.500" fill="#a9cbe8" stroke="#6a9bf0"/><path d="M6 6h6M9 6v7" stroke="#1a8a1a" stroke-width="2"/>'],
  ['Segmento', '<circle cx="4" cy="14" r="2" fill="none" stroke="#222"/><circle cx="14" cy="5" r="2" fill="none" stroke="#222"/><path d="M5 13l8-7" stroke="#222" stroke-width="1.4"/>'],
  ['Semirrecta verde', '<circle cx="8" cy="9" r="1.500" fill="none" stroke="#28a428"/><path d="M9 9h9" stroke="#28a428" stroke-width="1.500"/>'],
  ['Semirrecta roja', '<circle cx="8" cy="9" r="1.500" fill="none" stroke="#f01010"/><path d="M9 9h9" stroke="#f01010" stroke-width="1.500"/>'],
  ['Regla', '<path d="M1 13L13 2l4 4L5 17z" fill="#b9c4c9" stroke="#555"/><path d="M4 11l2 2M7 8l2 2M10 5l2 2" stroke="#555"/>'],
  ['Canal', '<path d="M1 3h16v6H1z" fill="#7db87d" opacity=".4"/><path d="M1 9h16v6H1z" fill="#d89aa8" opacity=".4"/><path d="M1 3h16" stroke="#5c5" stroke-dasharray="2 1"/><path d="M1 15h16" stroke="#e66" stroke-dasharray="2 1"/><path d="M1 13l4-6 3 5 3-7 3 5 3-4" fill="none" stroke="#aab4ff"/>'],
  ['Elipse roja', oval('#f02020')], ['Elipse marrón', oval('#8a5a1c')], ['Elipse verde', oval('#148a30')], ['Elipse lima', oval('#20e020')],
  ['Línea negra', diag('#111', 1)], ['Línea verde', diag('#3aaa3a', 1.5)], ['Línea roja', diag('#f01818', 1.7)],
  ['Horizontal negra', '<path d="M0 9h18" stroke="#111"/>'], ['Horizontal salmón', hline('#f08878')], ['Horizontal lima', hline('#00f000')], ['Horizontal verde', hline('#0a800a')],
  ['Horizontal roja', hline('#f01010')], ['Horizontal azul', hline('#6196ff')], ['Horizontal marino', hline('#0000a0')],
  ['Vertical', '<path d="M9 0v18" stroke="#222"/>'],
  ['Ángulo', '<path d="M16 15H2L13 3" fill="none" stroke="#d87070" stroke-width="1.300"/><path d="M8 8q3 2 3 6M7 10l2-2 1 3" fill="none" stroke="#22e"/><circle cx="15" cy="7" r="2" fill="none" stroke="#22e"/>'],
  ['Círculo', '<circle cx="8" cy="10" r="6" fill="none" stroke="#f08040" stroke-width="1.300"/>' + plus(8, 10) + plus(14, 4)],
  ['Ondas 1-5', '<path d="M1 8l4-3 2 9 4-11 2 8 3-9" fill="none" stroke="#5a8fff"/>' + plus(3, 8) + plus(6, 15) + plus(9, 5) + plus(13, 11) + plus(16, 3)],
  ['Ondas abc', '<path d="M3 15l6-9 5 9" fill="none" stroke="#5a8fff"/>' + plus(3, 13) + plus(10, 5) + plus(14, 15)],
  ['Correcto', '<path d="M1 10l3-2 3 3 8-9 2 2L7 16z" fill="#3ec43e" stroke="#158015" stroke-width=".7"/>'],
  ['Me gusta', '<path d="M1 8h4v8H1zM6 8l4-3V1h2q1 3 0 6h5v2q0 4-2 7H6z" fill="#3ec43e" stroke="#158015" stroke-width=".7"/>'],
  ['Incorrecto', '<path d="M2 5l3-3 4 4 4-4 3 3-4 4 4 4-3 3-4-4-4 4-3-3 4-4z" fill="#f01010" stroke="#a00" stroke-width=".6"/>'],
  ['Aviso', '<path d="M9 1l8 15H1z" fill="#ffb030" stroke="#b07010"/><path d="M9 6v5M9 12.500v2" stroke="#222" stroke-width="2"/>'],
  ['Flecha arriba', '<path d="M9 3l5 6h-3v6H7V9H4z" fill="#1c9a1c" stroke="#0b6a0b" stroke-width=".6"/>'],
  ['Flecha abajo', '<path d="M9 15l5-6h-3V3H7v6H4z" fill="#e01010"/>']
];
document.getElementById('tools').innerHTML = TOOLS.map(([name, art], k) =>
  `<button class="tool${k ? '' : ' on'}" aria-label="${name}"><svg width="18" height="18" viewBox="0 0 18 18" fill="none">${art}</svg></button>`).join('');
```
